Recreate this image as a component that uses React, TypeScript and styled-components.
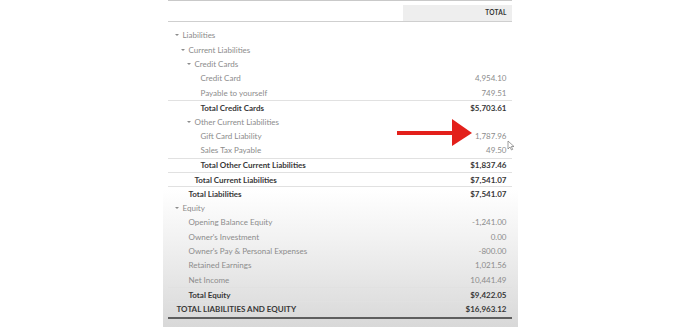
import styled, { createGlobalStyle } from "styled-components"

const GlobalStyle = createGlobalStyle`
    body {
        margin: 0;
        background: #ffffff;
        font-family: Lato, "Open Sans", sans-serif;
    }
`

const Page = styled.div`
    width: 680px;
    height: 327px;
    overflow: hidden;
    display: flex;
    justify-content: center;
    background: #ffffff;
`

const Panel = styled.div`
    position: relative;
    width: 355px;
    height: 327px;
    box-sizing: border-box;
    padding: 0 6px 0 5px;
    background: linear-gradient(to bottom, #ffffff 0%, #ffffff 58%, #f1f1f1 74%, #d8d8d8 100%);
`

const Report = styled.div`
    border-top: 1px solid #c9c9c9;
`

const HeaderRow = styled.div`
    display: flex;
    justify-content: flex-end;
    margin-top: 4px;
    border-bottom: 1px solid #cfcfcf;
`

const TotalHead = styled.div`
    width: 109px;
    height: 16px;
    line-height: 16px;
    box-sizing: border-box;
    padding-right: 5px;
    text-align: right;
    background: #eeeeee;
    color: #333333;
    font-size: 6.5px;
    font-weight: 700;
    letter-spacing: 0.2px;
`

const Body = styled.div`
    padding-top: 6px;
`

const Row = styled.div<{ $indent: number; $total?: boolean; $grand?: boolean }>`
    display: grid;
    grid-template-columns: 1fr auto;
    align-items: center;
    height: ${p => (p.$grand ? "18px" : "14.4px")};
    box-sizing: border-box;
    padding-left: ${p => p.$indent}px;
    padding-bottom: ${p => (p.$grand ? "1px" : "0")};
    font-size: 8px;
    color: ${p => (p.$total ? "#383838" : "#8c8c8c")};
    font-weight: ${p => (p.$total ? 700 : 400)};
    border-top: ${p => (p.$total ? "1px solid #e1e1e1" : "none")};
    border-bottom: ${p => (p.$grand ? "2px solid #5e5e5e" : "none")};
`

const Label = styled.span`
    display: flex;
    align-items: center;
    white-space: nowrap;
`

const Caret = styled.span`
    width: 0;
    height: 0;
    margin-right: 4px;
    border-left: 2px solid transparent;
    border-right: 2px solid transparent;
    border-top: 2.5px solid #8c8c8c;
`

const Value = styled.span`
    padding-right: 5px;
    text-align: right;
`

const Arrow = styled.svg`
    position: absolute;
    left: 234px;
    top: 119px;
`

const Cursor = styled.svg`
    position: absolute;
    left: 344px;
    top: 140px;
`

type Line = {
    label: string
    value?: string
    kind: "group" | "leaf" | "total" | "grand"
    level: number
}

const rows: Line[] = [
    { label: "Liabilities", kind: "group", level: 0 },
    { label: "Current Liabilities", kind: "group", level: 1 },
    { label: "Credit Cards", kind: "group", level: 2 },
    { label: "Credit Card", value: "4,954.10", kind: "leaf", level: 2 },
    { label: "Payable to yourself", value: "749.51", kind: "leaf", level: 2 },
    { label: "Total Credit Cards", value: "$5,703.61", kind: "total", level: 2 },
    { label: "Other Current Liabilities", kind: "group", level: 2 },
    { label: "Gift Card Liability", value: "1,787.96", kind: "leaf", level: 2 },
    { label: "Sales Tax Payable", value: "49.50", kind: "leaf", level: 2 },
    { label: "Total Other Current Liabilities", value: "$1,837.46", kind: "total", level: 2 },
    { label: "Total Current Liabilities", value: "$7,541.07", kind: "total", level: 1 },
    { label: "Total Liabilities", value: "$7,541.07", kind: "total", level: 0 },
    { label: "Equity", kind: "group", level: 0 },
    { label: "Opening Balance Equity", value: "-1,241.00", kind: "leaf", level: 0 },
    { label: "Owner's Investment", value: "0.00", kind: "leaf", level: 0 },
    { label: "Owner's Pay & Personal Expenses", value: "-800.00", kind: "leaf", level: 0 },
    { label: "Retained Earnings", value: "1,021.56", kind: "leaf", level: 0 },
    { label: "Net Income", value: "10,441.49", kind: "leaf", level: 0 },
    { label: "Total Equity", value: "$9,422.05", kind: "total", level: 0 },
    { label: "TOTAL LIABILITIES AND EQUITY", value: "$16,963.12", kind: "grand", level: 0 },
]

const indentFor = (r: Line) => {
    if (r.kind === "group") return 7 + 6 * r.level
    if (r.kind === "grand") return 9
    return 21 + 6 * r.level
}

export default function App() {
    return (
        <>
            <GlobalStyle />
            <Page>
                <Panel>
                    <Report>
                        <HeaderRow>
                            <TotalHead>TOTAL</TotalHead>
                        </HeaderRow>
                        <Body>
                            {rows.map((r, i) => (
                                <Row
                                    key={i}
                                    $indent={indentFor(r)}
                                    $total={r.kind === "total" || r.kind === "grand"}
                                    $grand={r.kind === "grand"}
                                >
                                    <Label>
                                        {r.kind === "group" && <Caret />}
                                        {r.label}
                                    </Label>
                                    <Value>{r.value}</Value>
                                </Row>
                            ))}
                        </Body>
                    </Report>

                    <Arrow width="76" height="28" viewBox="0 0 76 28">
                        <rect x="0" y="12" width="57" height="4" fill="#e3201b" />
                        <polygon points="55,0 75,14 55,27" fill="#e3201b" />
                    </Arrow>

                    <Cursor width="8" height="11" viewBox="0 0 8 11">
                        <path d="M1 1 L1 9 L3 7 L4.5 10 L5.7 9.4 L4.3 6.5 L7 6.5 Z" fill="#ffffff" stroke="#777" strokeWidth="0.7" />
                    </Cursor>
                </Panel>
            </Page>
        </>
    )
}
